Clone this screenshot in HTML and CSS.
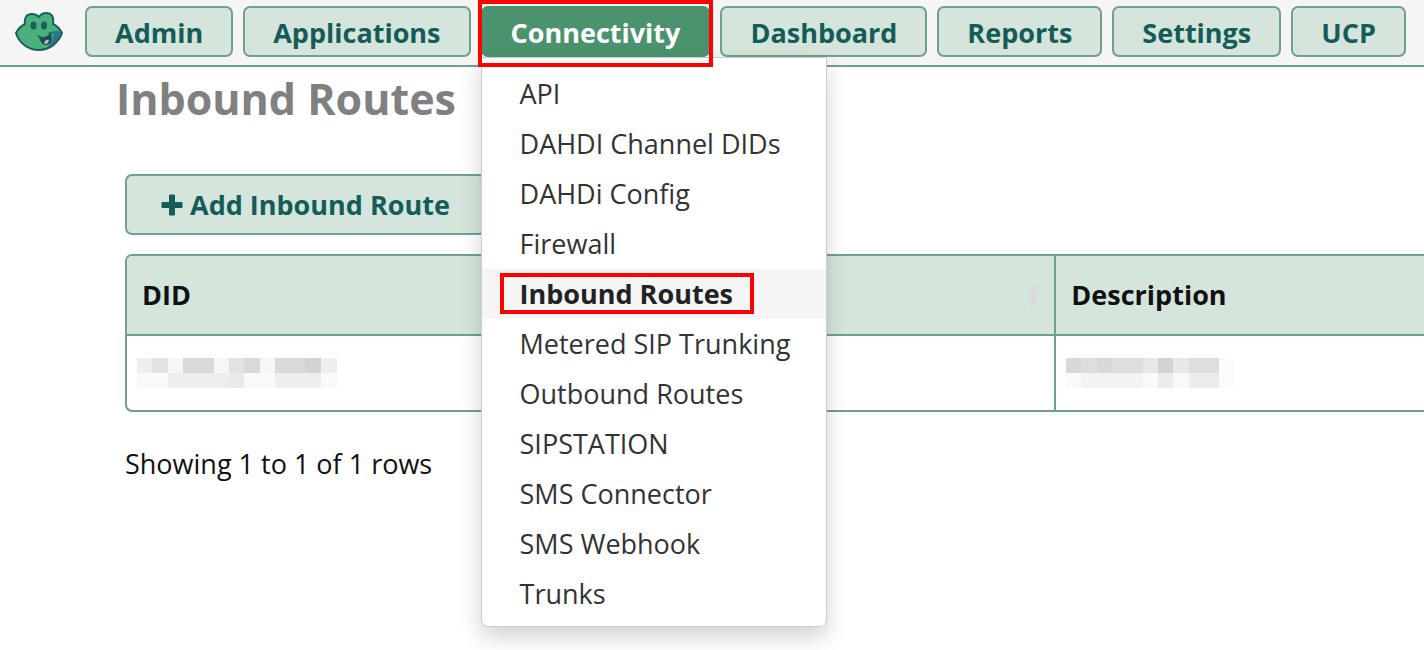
FILE: index.html
```html
<!DOCTYPE html>
<html lang="en">
<head>
  <meta charset="UTF-8" />
  <meta name="viewport" content="width=device-width, initial-scale=1.0"/>
  <title>Inbound Routes</title>
  <link rel="stylesheet" href="styles.css">
</head>
<body>

  <header class="navbar">
    <a class="logo" href="#" aria-label="Home">
      <svg viewBox="0 0 48 40" width="48" height="40">
        <path d="M10 12C9 5 12 2 17 2c3 0 5 1 7 3 2-3 4-4 7-4 6 0 8 4 7 11 4 2 7 5 9 9-3 9-12 17-23 17S4 31 1 21c2-4 5-7 9-9z" fill="#4bb07c"/>
        <path d="M38 20c3-2 6-1 8 1-2 7-8 13-15 15 5-4 8-9 7-16z" fill="#277a85"/>
        <path d="M10 12C9 5 12 2 17 2c3 0 5 1 7 3 2-3 4-4 7-4 6 0 8 4 7 11 4 2 7 5 9 9-3 9-12 17-23 17S4 31 1 21c2-4 5-7 9-9z" fill="none" stroke="#1c5f63" stroke-width="2" stroke-linejoin="round"/>
        <ellipse cx="18.5" cy="13.5" rx="3" ry="4" fill="#1c5f63"/>
        <ellipse cx="29" cy="13.5" rx="3" ry="4" fill="#1c5f63"/>
        <path d="M24 25c5 1 9-1 12-4 2 7 0 12-5 12-4 0-6-4-7-8z" fill="#174f58"/>
        <path d="M29 31c1-3 3-4 5-3-1 4-3 5-5 3z" fill="#d9b5b0"/>
        <path d="M23 24q1 1 3 1M34 21q2 1 4-1" fill="none" stroke="#1c5f63" stroke-width="1.5" stroke-linecap="round"/>
      </svg>
    </a>
    <nav class="menu">
      <button class="btn">Admin</button>
      <button class="btn">Applications</button>
      <div class="dropdown">
        <button class="btn active" aria-expanded="true">Connectivity</button>
        <div class="dropdown-menu">
          <a href="#">API</a>
          <a href="#">DAHDI Channel DIDs</a>
          <a href="#">DAHDi Config</a>
          <a href="#">Firewall</a>
          <a href="#" class="current"><span class="marked">Inbound Routes</span></a>
          <a href="#">Metered SIP Trunking</a>
          <a href="#">Outbound Routes</a>
          <a href="#">SIPSTATION</a>
          <a href="#">SMS Connector</a>
          <a href="#">SMS Webhook</a>
          <a href="#">Trunks</a>
        </div>
      </div>
      <button class="btn">Dashboard</button>
      <button class="btn">Reports</button>
      <button class="btn">Settings</button>
      <button class="btn">UCP</button>
    </nav>
  </header>

  <main class="page">
    <h1>Inbound Routes</h1>
    <div class="content">
      <button class="btn btn-add">
        <svg viewBox="0 0 22 22" width="22" height="22"><path d="M8.5 1h5v7.5H21v5h-7.5V21h-5v-7.5H1v-5h7.5z" fill="#145c58" stroke="#145c58" stroke-linejoin="round"/></svg>
        Add Inbound Route
      </button>
      <table class="routes">
        <thead>
          <tr>
            <th class="col-did">
              <div class="th-inner">DID
                <svg class="sort" viewBox="0 0 12 24" width="12" height="24"><path d="M7 0l3 3v13l-3 8H4l-1-8-2-3 2-5z"/></svg>
              </div>
            </th>
            <th>Description</th>
          </tr>
        </thead>
        <tbody>
          <tr>
            <td>
              <svg class="masked" viewBox="0 0 200 30" width="200" height="30" shape-rendering="crispEdges">
                <path fill="#eeeeee" d="M0 0h200v15H0z"/>
                <path fill="#f9f9f9" d="M0 15h200v15H0z"/>
                <path fill="#e2e2e2" d="M15 0h16v15H15zM92 0h15v15H92z"/>
                <path fill="#f6f6f6" d="M31 0h15v15H31zM77 0h15v15H77zM123 0h15v15h-15z"/>
                <path fill="#d9d9d9" d="M46 0h31v15H46zM107 0h16v15h-16zM138 0h30v15h-30z"/>
                <path fill="#d3d3d3" d="M168 0h16v15h-16z"/>
                <path fill="#eeeeee" d="M31 15h76v15H31zM138 15h46v15h-46z"/>
                <path fill="#e8eae9" d="M92 15h15v15H92z"/>
              </svg>
            </td>
            <td>
              <svg class="masked" viewBox="0 0 168 30" width="168" height="30" shape-rendering="crispEdges">
                <path fill="#dedede" d="M0 0h153v15H0z"/>
                <path fill="#f3f3f3" d="M0 15h153v15H0z"/>
                <path fill="#d8d8d8" d="M0 0h15v15H0zM31 0h15v15H31z"/>
                <path fill="#e7e9e8" d="M77 0h15v15H77zM107 0h16v15h-16z"/>
                <path fill="#d3d3d3" d="M92 0h15v15H92z"/>
                <path fill="#f9f9f9" d="M0 15h15v15H0zM77 15h15v15H77zM107 15h16v15h-16z"/>
                <path fill="#ececec" d="M92 15h15v15H92zM123 15h30v15h-30z"/>
                <path fill="#fcfcfc" d="M153 0h15v30h-15z"/>
              </svg>
            </td>
          </tr>
        </tbody>
      </table>
      <p class="summary">Showing 1 to 1 of 1 rows</p>
    </div>
  </main>

</body>
</html>
```
FILE: styles.css
```css
* {
  box-sizing: border-box;
}

body {
  font-family: "Open Sans", sans-serif;
  font-size: 27px;
  line-height: 36px;
  color: #111;
  background-color: #fff;
  margin: 0;
  min-height: 100vh;
}

.navbar {
  display: flex;
  align-items: flex-start;
  gap: 22px;
  padding: 6px 0 8px 15px;
  background-color: #f5f5f4;
  border-bottom: 2px solid #6da28d;
}

.logo {
  display: flex;
  padding-top: 6px;
}

.menu {
  display: flex;
  gap: 10px;
}

.btn {
  font-family: inherit;
  font-size: 27px;
  font-weight: bold;
  line-height: 35px;
  white-space: nowrap;
  color: #145c58;
  background-color: #d5e5dc;
  border: 2px solid #6da28d;
  border-radius: 7px;
  padding: 7px 28px 5px;
  cursor: pointer;
}

.btn.active {
  color: #fff;
  background-color: #4b936e;
  border-color: #4b936e;
}

.dropdown {
  position: relative;
}

/* highlight frame around the open menu */
.dropdown::after {
  content: "";
  position: absolute;
  inset: -6px -3px -10px;
  border: 4px solid #f00;
  pointer-events: none;
}

.dropdown-menu {
  position: absolute;
  top: 100%;
  left: 0;
  width: 346px;
  padding: 11px 0 7px;
  background-color: #fff;
  border: 1px solid #ccc;
  border-radius: 0 0 7px 7px;
  box-shadow: 0 10px 22px rgba(0, 0, 0, 0.18);
}

.dropdown-menu a {
  display: block;
  padding: 7px 38px;
  color: #333;
  text-decoration: none;
  white-space: nowrap;
}

.dropdown-menu .current {
  font-weight: bold;
  color: #222;
  background-color: #f5f5f5;
}

.marked {
  position: relative;
}

.marked::after {
  content: "";
  position: absolute;
  inset: -2px -21px -2px -20px;
  border: 4px solid #f00;
}

.page {
  padding-left: 116px;
}

h1 {
  margin: 0;
  font-size: 43px;
  line-height: 64px;
  color: #808080;
}

.content {
  padding: 43px 0 0 9px;
}

.btn-add {
  display: flex;
  align-items: center;
  gap: 7px;
  padding: 11px 34px;
}

.routes {
  width: 100%;
  margin-top: 19px;
  border: 2px solid #6da28d;
  border-right: 0;
  border-radius: 7px 0 0 7px;
  border-spacing: 0;
  overflow: hidden;
}

.routes th {
  padding: 21px 15px;
  text-align: left;
  background-color: #d5e5dc;
  border-bottom: 2px solid #6da28d;
}

.routes td {
  padding: 22px 10px;
}

.routes th + th,
.routes td + td {
  border-left: 2px solid #6da28d;
}

.col-did {
  width: 71.5%;
}

.th-inner {
  display: flex;
  align-items: center;
  justify-content: space-between;
}

.sort {
  fill: #d8dcd8;
}

.masked {
  display: block;
}

.summary {
  margin: 34px 0 0;
}
```
